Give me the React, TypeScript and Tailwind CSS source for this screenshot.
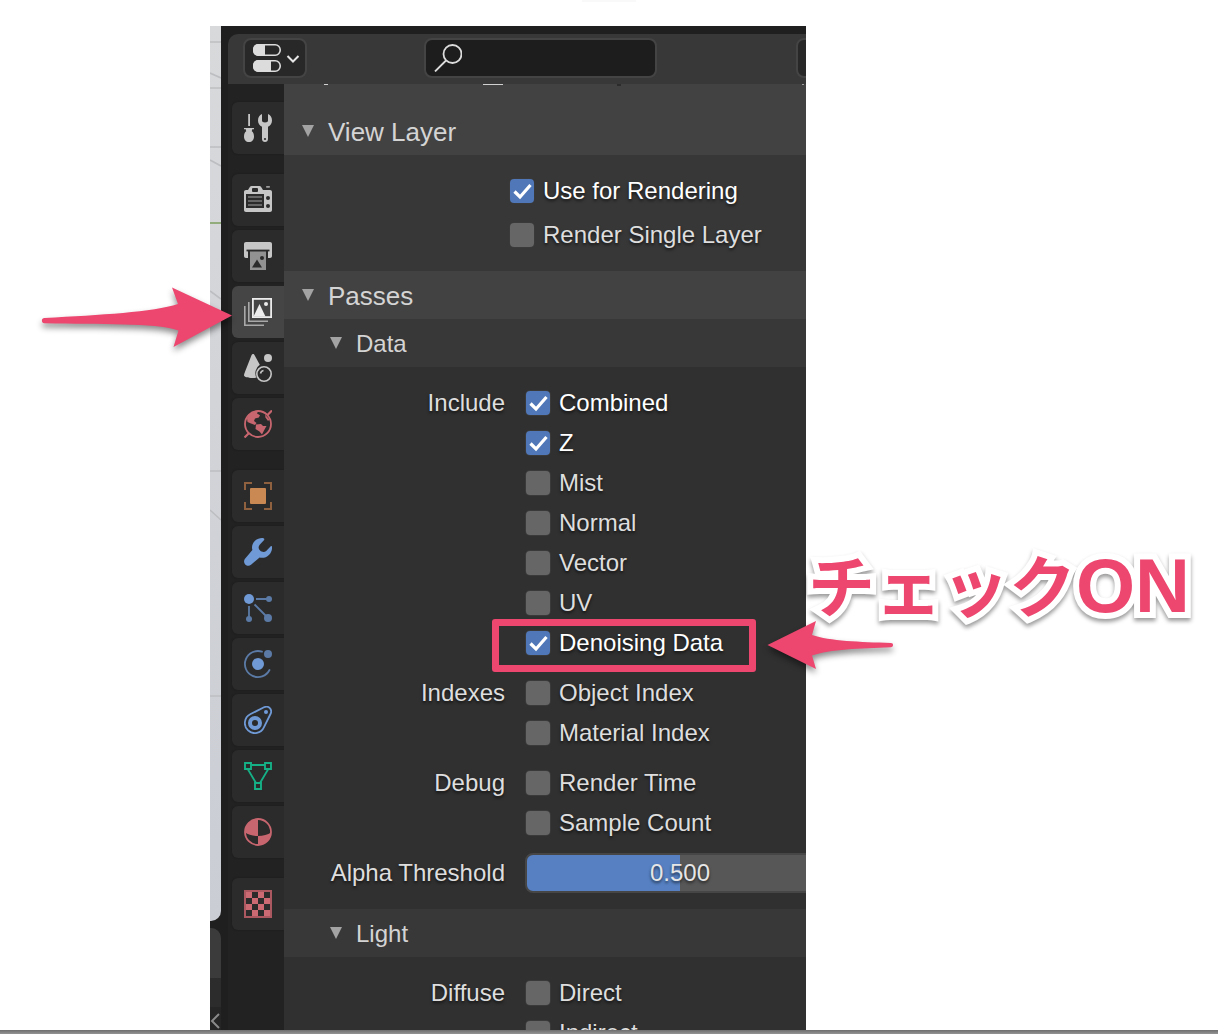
import React, { useState } from "react";

type IconProps = { children: React.ReactNode };

function Icon({ children }: IconProps) {
  return (
    <svg viewBox="0 0 28 28" className="size-7 shrink-0" fill="none" aria-hidden="true">
      {children}
    </svg>
  );
}

const LIGHT = "#c6c6c6";
const RED = "#c8666f";
const BLUE = "#6f9ad6";
const DIM_BLUE = "#5b7ba6";
const GREEN = "#15b086";
const TAB = "#2b2b2b";

const ToolIcon = () => (
  <Icon>
    <path d="M4.2 0h1.8v12H4.2zM0 14h10v1.2H8.2c0 1-.4 1.500-.4 2C9.200 18 10 20 10 22.500 10 26 8 28 5 28s-5-2-5-5.500C0 20 .8 18 2.200 17.200c0-.5-.4-1-.4-2H0z" fill={LIGHT} />
    <path d="M18 0v6.500c0 1 1 2 3 2s3-1 3-2V0c2.500 1 4 3.500 4 6.500 0 3-1.500 5-4 6.200V25c0 2-1.200 3-3 3s-3-1-3-3V12.700c-2.500-1.200-4-3.200-4-6.200C14 3.500 15.500 1 18 0z" fill={LIGHT} />
    <circle cx="21" cy="25" r="1.100" fill={TAB} />
  </Icon>
);

const RenderIcon = () => (
  <Icon>
    <path d="M2 4h2l2-3.200C6.300.3 7 0 7.500 0h8c.6 0 1.200.3 1.500.8L19 4h7c1.200 0 2 .8 2 2v18c0 1.200-.8 2-2 2H2c-1.200 0-2-.8-2-2V6c0-1.200.8-2 2-2z" fill={LIGHT} />
    <rect x="8" y="2" width="6" height="4" rx="1" fill={TAB} />
    <rect x="22" y="0" width="4" height="1.800" rx=".8" fill="#9c9c9c" />
    <rect x="2" y="8" width="18" height="14" fill={TAB} />
    <path d="M4 11h14M4 15h14M4 19h14" stroke="#666" strokeWidth="1.800" />
    <circle cx="24" cy="12" r="2" fill={TAB} />
    <circle cx="24" cy="20" r="2" fill={TAB} />
  </Icon>
);

const OutputIcon = () => (
  <Icon>
    <path d="M2 0h24c1.200 0 2 .8 2 2v12c0 1.200-.8 2-2 2h-2V9H4v7H2c-1.200 0-2-.8-2-2V2C0 .8.8 0 2 0z" fill={LIGHT} />
    <path d="M2.500 8.500h23" stroke={TAB} strokeWidth="1.800" />
    <path d="M6 9.500h16V28H6z" fill="#929292" />
    <path d="M8 25.500l5-8 5 8z" fill={TAB} />
    <circle cx="18" cy="16" r="2" fill={TAB} />
  </Icon>
);

const ViewLayerIcon = () => (
  <Icon>
    <path d="M.8 8v19.200H20M4.800 4v19.200H24" stroke="#a8a8a8" strokeWidth="1.600" />
    <rect x="8.900" y=".9" width="18.200" height="18.200" stroke="#ececec" strokeWidth="1.800" />
    <path d="M9.500 18.500l6-12.500 6 12.500z" fill="#ececec" />
    <circle cx="22" cy="6" r="2" fill="#ececec" />
  </Icon>
);

const SceneIcon = () => (
  <Icon>
    <path d="M9 0c.8 0 1.200.5 1.600 1.300l5.200 9.500a10 10 0 0 0-3.300 13C6 24.500.5 23.500 0 21.500c0-1.500.8-3 1.300-4.500L7.500 1.200C7.900.4 8.300 0 9 0z" fill={LIGHT} />
    <circle cx="24" cy="4" r="4" fill={LIGHT} />
    <circle cx="20" cy="20" r="7.200" stroke={LIGHT} strokeWidth="1.600" />
    <path d="M16.500 19.500c.3-1.600 1.300-2.700 3-3" stroke={LIGHT} strokeWidth="1.600" />
  </Icon>
);

const WorldIcon = () => (
  <Icon>
    <circle cx="14" cy="14" r="13" stroke={RED} strokeWidth="1.800" />
    <path d="M28 .5l-4.500 4.500M.5 27.500L5 23" stroke={RED} strokeWidth="2.200" />
    <path d="M3 8C5 3.500 9 1.500 14 1.200l-1 2.300 3 1.700-1.200 2.300-3.800 1-1 2.500 2.500 2-1.500 2L7 13.500 3.500 12z" fill={RED} />
    <path d="M12 14.500l5-.5 2 2h3.500l-2.500 4.500-2 4-2.500-3-4-2.500z" fill={RED} />
    <path d="M21 4.500l4.500 5-1.500 1.500-2.500-3.500z" fill={RED} />
  </Icon>
);

const ObjectIcon = () => (
  <Icon>
    <path d="M1 8V1h7M20 1h7v7M27 20v7h-7M8 27H1v-7" stroke="#8f613f" strokeWidth="2" />
    <rect x="6" y="6" width="16" height="16" rx="1" fill="#ca8852" />
  </Icon>
);

const ModifierIcon = () => (
  <Icon>
    <path d="M19.500.2c-2.600-.5-6 .3-8.500 2.600-2.700 2.600-3.600 6-2.600 9.300L1 20.700c-1.300 1.500-1.300 4 .2 5.800 1.700 1.700 4.300 1.600 5.800.3l8.600-7.200c3.600.8 6.900-.2 9.300-2.600 2.300-2.300 3.400-5.300 3.100-8.300-.1-.9-1-.8-1.500-.2l-4.300 4.400c-1.600 1.500-4.100 1.600-6.100-.3-2-2-1.900-4.500-.2-6.200l4-4.100c.6-.7.700-1.500-.4-2.100z" fill={BLUE} />
  </Icon>
);

const ParticlesIcon = () => (
  <Icon>
    <path d="M12 5h12M5 12v12M10.500 10.500L24 24" stroke={DIM_BLUE} strokeWidth="1.800" />
    <circle cx="5" cy="5" r="5" fill={BLUE} />
    <circle cx="25" cy="5" r="3" fill={DIM_BLUE} />
    <circle cx="5" cy="25" r="3" fill={DIM_BLUE} />
    <circle cx="24" cy="24" r="4" fill={DIM_BLUE} />
  </Icon>
);

const PhysicsIcon = () => (
  <Icon>
    <path d="M18 1.700A13 13 0 1 0 25.500 20" stroke={DIM_BLUE} strokeWidth="1.800" strokeLinecap="round" />
    <circle cx="14" cy="14" r="6" fill={BLUE} />
    <circle cx="24" cy="4" r="4" fill={DIM_BLUE} />
  </Icon>
);

const ConstraintIcon = () => (
  <Icon>
    <path d="M20 1.300L6.200 8.300A10 10 0 1 0 20 21.200L26.500 8C28.800 3.500 24.500-.8 20 1.300z" stroke={BLUE} strokeWidth="1.800" />
    <circle cx="11" cy="17" r="5" stroke={BLUE} strokeWidth="4" />
    <circle cx="22" cy="6" r="2" fill={BLUE} />
  </Icon>
);

const DataIcon = () => (
  <Icon>
    <path d="M7 3h14M4 7.500l8 13.500M24 7.500L16 21" stroke={GREEN} strokeWidth="1.800" />
    <path d="M1 1h6v6H1zM21 1h6v6h-6zM11 21h6v6h-6z" stroke={GREEN} strokeWidth="1.900" />
  </Icon>
);

const MaterialIcon = () => (
  <Icon>
    <circle cx="14" cy="14" r="13" stroke={RED} strokeWidth="1.800" />
    <path d="M14 1v17C9 18 4 16.500 1 14.500 1 7 7 1 14 1zM14 18c5 0 10-1.500 13-3.500C27 21 21 27 14 27z" fill={RED} />
  </Icon>
);

const TextureIcon = () => (
  <Icon>
    <rect x="1" y="1" width="26" height="26" stroke="#ac5860" strokeWidth="2" />
    <path
      d="M2 2h6v6H2zM14 2h6v6h-6zM8 8h6v6H8zM20 8h6v6h-6zM2 14h6v6H2zM14 14h6v6h-6zM8 20h6v6H8zM20 20h6v6h-6z"
      fill="#cc6a73"
    />
  </Icon>
);

type Tab = { name: string; icon: () => React.ReactElement };

const TAB_GROUPS: Tab[][] = [
  [{ name: "Tool", icon: ToolIcon }],
  [
    { name: "Render", icon: RenderIcon },
    { name: "Output", icon: OutputIcon },
    { name: "View Layer", icon: ViewLayerIcon },
    { name: "Scene", icon: SceneIcon },
    { name: "World", icon: WorldIcon },
  ],
  [
    { name: "Object", icon: ObjectIcon },
    { name: "Modifiers", icon: ModifierIcon },
    { name: "Particles", icon: ParticlesIcon },
    { name: "Physics", icon: PhysicsIcon },
    { name: "Constraints", icon: ConstraintIcon },
    { name: "Object Data", icon: DataIcon },
    { name: "Material", icon: MaterialIcon },
  ],
  [{ name: "Texture", icon: TextureIcon }],
];

function TabBar() {
  const [active, setActive] = useState("View Layer");
  return (
    <nav className="flex w-14 shrink-0 flex-col gap-5 bg-[#222222] pt-[18px] pl-1">
      {TAB_GROUPS.map((group) => (
        <div key={group[0].name} className="flex flex-col gap-1">
          {group.map(({ name, icon: Glyph }) => (
            <button
              key={name}
              type="button"
              aria-label={name}
              aria-pressed={active === name}
              onClick={() => setActive(name)}
              className={
                active === name
                  ? "flex h-[52px] items-center rounded-l-md bg-[#454545] pl-3"
                  : "flex h-[52px] items-center rounded-l-md bg-[#2b2b2b] pl-3 shadow-[0_0_2px_#1a1a1a]"
              }
            >
              <Glyph />
            </button>
          ))}
        </div>
      ))}
    </nav>
  );
}

function Check({ label, on = false }: { label: string; on?: boolean }) {
  const [checked, setChecked] = useState(on);
  return (
    <label className="flex items-center gap-[9px] whitespace-nowrap">
      <span className="relative flex size-6 shrink-0">
        <input
          type="checkbox"
          checked={checked}
          onChange={(e) => setChecked(e.target.checked)}
          className="peer size-6 appearance-none rounded-[4px] bg-[#666666] shadow-[0_0_0_1px_#3a3a3a] checked:bg-[#5078b8]"
        />
        <svg
          viewBox="0 0 24 24"
          fill="none"
          aria-hidden="true"
          className="pointer-events-none absolute inset-0 hidden peer-checked:block"
        >
          <path d="M4.500 12.500l5.500 5.500L20.500 6" stroke="#fff" strokeWidth="3.200" />
        </svg>
      </span>
      <span className={checked ? "text-white" : "text-[#dedede]"}>{label}</span>
    </label>
  );
}

function Row({ label, children }: { label?: string; children: React.ReactNode }) {
  return (
    <div className="grid h-10 grid-cols-[221px_1fr] items-center gap-[21px]">
      <span className="text-right whitespace-nowrap text-[#dedede]">{label}</span>
      {children}
    </div>
  );
}

function Header({ title, sub = false }: { title: string; sub?: boolean }) {
  return (
    <h2>
      <button
        type="button"
        aria-expanded="true"
        className={
          sub
            ? "flex h-12 w-full items-center gap-3 bg-[#383838] pt-0.5 pl-[46px] text-2xl text-[#d4d4d4]"
            : "flex h-12 w-full items-center gap-3 bg-[#424242] pt-0.5 pl-[18px] text-[26px] text-[#d4d4d4]"
        }
      >
        <svg viewBox="0 0 12 12" className="mb-0.5 size-3" aria-hidden="true">
          <path d="M0 0h12L6 12z" fill="#a3a3a3" />
        </svg>
        <span className="pl-0.5">{title}</span>
      </button>
    </h2>
  );
}

function Threshold() {
  const [value, setValue] = useState(0.5);
  return (
    <div className="relative -ml-px h-10 w-[310px]">
      <input
        type="range"
        aria-label="Alpha Threshold"
        min={0}
        max={1}
        step={0.001}
        value={value}
        onChange={(e) => setValue(Number(e.target.value))}
        className="block h-10 w-full appearance-none rounded-lg border-2 border-[#464646] bg-[#575757] bg-no-repeat [&::-webkit-slider-thumb]:opacity-0"
        style={{
          backgroundImage: "linear-gradient(#5680c2, #5680c2)",
          backgroundSize: `${value * 100}% 100%`,
        }}
      />
      <output className="pointer-events-none absolute inset-0 flex items-center justify-center text-[#e6e6e6]">
        {value.toFixed(3)}
      </output>
    </div>
  );
}

function Toolbar() {
  return (
    <header className="flex h-[50px] shrink-0 items-center overflow-hidden rounded-tl-[10px] bg-[#383838] pb-0.5 pl-[15px]">
      <button
        type="button"
        aria-label="Editor type"
        className="flex h-10 w-16 shrink-0 items-center gap-1 rounded-lg border-2 border-[#444444] bg-[#282828] pl-2"
      >
        <Icon>
          <rect x=".8" y=".8" width="26.400" height="10.400" rx="5" stroke="#dcdcdc" strokeWidth="1.600" />
          <path d="M12 0H5a5 5 0 0 0-5 5v2a5 5 0 0 0 5 5h7z" fill="#dcdcdc" />
          <rect x=".8" y="16.800" width="26.400" height="10.400" rx="5" stroke="#dcdcdc" strokeWidth="1.600" />
          <path d="M18 16H5a5 5 0 0 0-5 5v2a5 5 0 0 0 5 5h13z" fill="#dcdcdc" />
        </Icon>
        <svg viewBox="0 0 16 16" className="size-4" fill="none" aria-hidden="true">
          <path d="M2.500 6L8 11.500 13.500 6" stroke="#e6e6e6" strokeWidth="2" />
        </svg>
      </button>
      <label className="ml-[117px] flex h-10 w-[233px] shrink-0 items-center rounded-lg border-2 border-[#444444] bg-[#1d1d1d] pl-2">
        <Icon>
          <circle cx="18.500" cy="10" r="9" stroke="#dcdcdc" strokeWidth="1.800" />
          <path d="M12 16.500L1 27.500" stroke="#dcdcdc" strokeWidth="1.800" />
        </Icon>
        <input type="text" aria-label="Search" className="w-full min-w-0 bg-transparent px-2 text-white outline-none" />
      </label>
      <button
        type="button"
        aria-label="Options"
        className="ml-[139px] h-10 w-16 shrink-0 rounded-lg border-2 border-[#444444] bg-[#282828]"
      />
    </header>
  );
}

function Properties() {
  return (
    <div className="min-w-0 flex-1 overflow-hidden bg-[#303030] text-2xl [text-shadow:0_2px_3px_rgb(0_0_0/0.6)]">
      <div className="flex h-[23px] bg-[#424242] pl-10">
        <span className="h-px w-1 shrink-0 bg-[#d0d0d0]" />
        <span className="ml-[155px] h-px w-5 shrink-0 bg-[#d0d0d0]" />
        <span className="ml-[114px] h-0.5 w-1 shrink-0 bg-[#2c2c2c]" />
        <span className="ml-[181px] h-px w-0.5 shrink-0 bg-[#a0a0a0]" />
      </div>
      <Header title="View Layer" />
      <div className="flex h-[116px] flex-col gap-5 bg-[#373737] pt-6 pl-[226px]">
        <div className="flex h-6 items-center">
          <Check label="Use for Rendering" on />
        </div>
        <div className="flex h-6 items-center">
          <Check label="Render Single Layer" />
        </div>
      </div>
      <Header title="Passes" />
      <Header title="Data" sub />
      <div className="flex flex-col gap-2.5 py-4">
        <div>
          <Row label="Include">
            <Check label="Combined" on />
          </Row>
          <Row>
            <Check label="Z" on />
          </Row>
          <Row>
            <Check label="Mist" />
          </Row>
          <Row>
            <Check label="Normal" />
          </Row>
          <Row>
            <Check label="Vector" />
          </Row>
          <Row>
            <Check label="UV" />
          </Row>
          <Row>
            <div className="relative">
              <Check label="Denoising Data" on />
              <span className="pointer-events-none absolute -top-2 -left-[34px] h-[53px] w-[264px] rounded-[3px] border-[7px] border-[#ed466f]" />
            </div>
          </Row>
        </div>
        <div>
          <Row label="Indexes">
            <Check label="Object Index" />
          </Row>
          <Row>
            <Check label="Material Index" />
          </Row>
        </div>
        <div>
          <Row label="Debug">
            <Check label="Render Time" />
          </Row>
          <Row>
            <Check label="Sample Count" />
          </Row>
        </div>
        <Row label="Alpha Threshold">
          <Threshold />
        </Row>
      </div>
      <Header title="Light" sub />
      <div className="pt-4">
        <Row label="Diffuse">
          <Check label="Direct" />
        </Row>
        <Row>
          <Check label="Indirect" />
        </Row>
      </div>
    </div>
  );
}

function ViewportEdge() {
  return (
    <div className="flex w-[11px] shrink-0 flex-col gap-[7px] overflow-hidden">
      <div className="h-[895px] shrink-0 rounded-br-[10px] bg-linear-to-b from-[#d8d9db] to-[#cacdd4]">
        <svg viewBox="0 0 11 895" className="w-[11px]" fill="none" aria-hidden="true">
          <path
            d="M0 16h11M0 62h11M0 121h11M0 445h11M0 670h11M0 47l11 5M0 134l11 6M0 265l11 8M0 484l11 10"
            stroke="#bdbec1"
            strokeWidth="1.600"
          />
          <path d="M0 197h11" stroke="#93ac7c" strokeWidth="2" />
        </svg>
      </div>
      <div className="flex flex-1 flex-col overflow-hidden rounded-tr-[10px] bg-[#2c2c2c]">
        <div className="h-[50px] shrink-0 bg-[#3b3b3b]" />
        <div className="h-[29px] shrink-0" />
        <div className="flex-1 bg-[#252525] pt-1.5">
          <svg viewBox="0 0 11 16" className="w-[11px]" fill="none" aria-hidden="true">
            <path d="M9 1L2 8l7 7" stroke="#8a8a8a" strokeWidth="2" />
          </svg>
        </div>
      </div>
    </div>
  );
}

export default function App() {
  return (
    <div className="flex h-screen flex-col overflow-hidden bg-white font-['Liberation_Sans',sans-serif]">
      <div className="flex h-[26px] shrink-0 justify-center">
        <span className="h-0.5 w-[54px] bg-[#f9f9f9]" />
      </div>
      <main className="grid min-h-0 flex-1 grid-cols-[minmax(0,210fr)_minmax(0,596fr)_minmax(0,412fr)]">
        <div />
        <section className="relative min-h-0">
          <div className="flex h-full overflow-hidden bg-[#1f1f1f]">
            <ViewportEdge />
            <div className="flex min-w-0 flex-1 flex-col pt-2 pl-[7px]">
              <Toolbar />
              <div className="flex min-h-0 flex-1">
                <TabBar />
                <Properties />
              </div>
            </div>
          </div>
          <svg
            viewBox="0 0 192 62"
            className="pointer-events-none absolute top-[261px] -left-[169px] w-48 overflow-visible drop-shadow-[0_4px_3px_rgb(0_0_0/0.45)]"
            aria-hidden="true"
          >
            <path
              d="M191 28.500L131 .5l6 16.500C112 25 60 28 3.500 31a2.500 2.500 0 0 0 0 5.200C60 38 112 35 137.500 43.500L132.500 60z"
              fill="#ed466f"
            />
          </svg>
          <svg
            viewBox="0 0 126 50"
            className="pointer-events-none absolute top-[594px] -right-[87px] w-[126px] overflow-visible drop-shadow-[0_4px_3px_rgb(0_0_0/0.45)]"
            aria-hidden="true"
          >
            <path
              d="M.5 25L49 1l-4 14c18 6 48 7 79 8a2 2 0 0 1 0 4.200C93 28.500 63 29 45 35.500L49 49z"
              fill="#ed466f"
            />
          </svg>
        </section>
        <div className="relative pt-[507px] pl-0.5">
          <p className="leading-[100px] font-bold whitespace-nowrap text-[#ed466f] [-webkit-text-stroke:12px_white] [paint-order:stroke_fill] drop-shadow-[0_3px_2px_rgb(0_0_0/0.4)]">
            <span className="font-['Noto_Sans_CJK_JP',sans-serif] text-[67px]">チェック</span>
            <span className="text-[76px]">ON</span>
          </p>
        </div>
      </main>
      <div className="h-1 shrink-0 bg-linear-to-b from-[#6e6e6e] to-[#949494]" />
    </div>
  );
}
